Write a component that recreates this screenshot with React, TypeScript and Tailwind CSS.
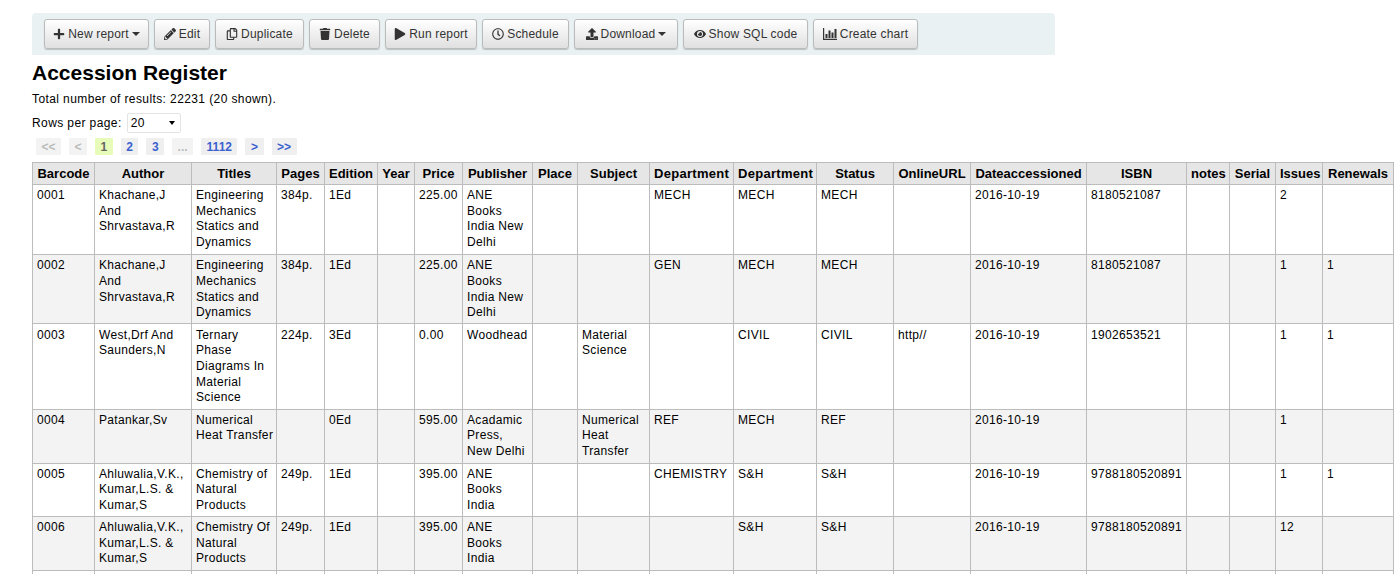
import { FaPlus, FaPencilAlt, FaRegCopy, FaTrash, FaPlay, FaRegClock, FaUpload, FaEye } from 'react-icons/fa';
import type { ReactNode } from 'react';

const columns: { label: string; width: number }[] = [
  { label: 'Barcode', width: 62 },
  { label: 'Author', width: 97 },
  { label: 'Titles', width: 85 },
  { label: 'Pages', width: 48 },
  { label: 'Edition', width: 53 },
  { label: 'Year', width: 37 },
  { label: 'Price', width: 48 },
  { label: 'Publisher', width: 70 },
  { label: 'Place', width: 45 },
  { label: 'Subject', width: 72 },
  { label: 'Department', width: 84 },
  { label: 'Department', width: 83 },
  { label: 'Status', width: 77 },
  { label: 'OnlineURL', width: 77 },
  { label: 'Dateaccessioned', width: 116 },
  { label: 'ISBN', width: 100 },
  { label: 'notes', width: 43 },
  { label: 'Serial', width: 46 },
  { label: 'Issues', width: 47 },
  { label: 'Renewals', width: 71 },
];

const rows: string[][] = [
  ['0001', 'Khachane,J And Shrvastava,R', 'Engineering Mechanics Statics and Dynamics', '384p.', '1Ed', '', '225.00', 'ANE Books India New Delhi', '', '', 'MECH', 'MECH', 'MECH', '', '2016-10-19', '8180521087', '', '', '2', ''],
  ['0002', 'Khachane,J And Shrvastava,R', 'Engineering Mechanics Statics and Dynamics', '384p.', '1Ed', '', '225.00', 'ANE Books India New Delhi', '', '', 'GEN', 'MECH', 'MECH', '', '2016-10-19', '8180521087', '', '', '1', '1'],
  ['0003', 'West,Drf And Saunders,N', 'Ternary Phase Diagrams In Material Science', '224p.', '3Ed', '', '0.00', 'Woodhead', '', 'Material Science', '', 'CIVIL', 'CIVIL', 'http//', '2016-10-19', '1902653521', '', '', '1', '1'],
  ['0004', 'Patankar,Sv', 'Numerical Heat\u00a0Transfer', '', '0Ed', '', '595.00', 'Acadamic Press, New Delhi', '', 'Numerical Heat Transfer', 'REF', 'MECH', 'REF', '', '2016-10-19', '', '', '', '1', ''],
  ['0005', 'Ahluwalia,V.K., Kumar,L.S. & Kumar,S', 'Chemistry of Natural Products', '249p.', '1Ed', '', '395.00', 'ANE Books India', '', '', 'CHEMISTRY', 'S&H', 'S&H', '', '2016-10-19', '9788180520891', '', '', '1', '1'],
  ['0006', 'Ahluwalia,V.K., Kumar,L.S. & Kumar,S', 'Chemistry Of Natural Products', '249p.', '1Ed', '', '395.00', 'ANE Books India', '', '', '', 'S&H', 'S&H', '', '2016-10-19', '9788180520891', '', '', '12', ''],
];

// row heights in the picture don't round evenly, so the first rows get their own padding
const rowPadding = ['pt-[3px] pb-[4px]', 'pt-[3px] pb-[2px]', 'pt-[4px] pb-[3px]', 'py-[3px]', 'py-[3px]', 'py-[3px]'];

// font-awesome 4 bar-chart, the package only has the newer one
function BarChartIcon() {
  return (
    <svg viewBox="0 0 14 12" className="h-[12px] w-[14px]" fill="currentColor">
      <path d="M0 0h1.2v10.8H14V12H0z" />
      <path d="M2.5 6h2v4h-2zM5.5 2.5h2V10h-2zM8.5 4.5h2V10h-2zM11.5 1h2v9h-2z" />
    </svg>
  );
}

function Caret() {
  return <span className="inline-block h-0 w-0 border-x-4 border-t-4 border-x-transparent border-t-[#333]" />;
}

function ToolButton({ icon, label, caret, width }: { icon: ReactNode; label: string; caret?: boolean; width: string }) {
  return (
    <button className={`flex h-[30px] items-center justify-center gap-[3px] rounded-[3px] border border-[#bbb] bg-gradient-to-b from-white to-[#e0e0e0] text-[12px] tracking-[0.2px] text-[#333] shadow-[0_1px_1px_rgba(0,0,0,0.2)] ${width}`}>
      <span className="text-[12px]">{icon}</span>
      {label}
      {caret && <Caret />}
    </button>
  );
}

function PageLink({ children, tone = 'link' }: { children: ReactNode; tone?: 'link' | 'off' | 'current' }) {
  const toneClass =
    tone === 'off' ? 'bg-[#f3f3f3] text-[#bbb]' : tone === 'current' ? 'bg-[#e6fcb8] text-[#666]' : 'bg-[#efefef] text-[#3a62d0]';
  return <span className={`flex h-[17px] items-center rounded-[1px] px-[5.5px] text-[12px] font-bold tracking-normal ${toneClass}`}>{children}</span>;
}

export default function App() {
  return (
    <div className="h-screen overflow-hidden bg-white pl-[32px] pt-[13px] font-['Liberation_Sans',Arial,sans-serif] text-[12px] tracking-[0.4px] text-black">
      <div className="flex h-[42px] w-[1023px] items-center gap-[5px] rounded-t-[4px] bg-[#e9f1f3] pb-[1px] pl-[12px]">
        <ToolButton icon={<FaPlus />} label="New report" caret width="w-[105px]" />
        <ToolButton icon={<FaPencilAlt />} label="Edit" width="w-[56px]" />
        <ToolButton icon={<FaRegCopy />} label="Duplicate" width="w-[89px]" />
        <ToolButton icon={<FaTrash />} label="Delete" width="w-[71px]" />
        <ToolButton icon={<FaPlay />} label="Run report" width="w-[92px]" />
        <ToolButton icon={<FaRegClock />} label="Schedule" width="w-[87px]" />
        <ToolButton icon={<FaUpload />} label="Download" caret width="w-[104px]" />
        <ToolButton icon={<FaEye />} label="Show SQL code" width="w-[125px]" />
        <ToolButton icon={<BarChartIcon />} label="Create chart" width="w-[105px]" />
      </div>

      <h1 className="mt-[6px] text-[21px] leading-[24px] font-bold tracking-normal">Accession Register</h1>
      <p className="mt-[6px] leading-[16px]">Total number of results: 22231 (20 shown).</p>

      <div className="mt-[6px] flex items-center gap-[5px] leading-[16px]">
        <span>Rows per page:</span>
        <div className="flex h-[20px] w-[54px] items-center justify-between rounded-[2px] border border-[#e4e4e4] pl-[3px] pr-[5px]">
          <span>20</span>
          <span className="h-0 w-0 border-x-[3.5px] border-t-[4px] border-x-transparent border-t-black" />
        </div>
      </div>

      <div className="mt-[5px] flex gap-[8px] pl-[4px]">
        <PageLink tone="off">&lt;&lt;</PageLink>
        <PageLink tone="off">&lt;</PageLink>
        <PageLink tone="current">1</PageLink>
        <PageLink>2</PageLink>
        <PageLink>3</PageLink>
        <PageLink tone="off">...</PageLink>
        <PageLink>1112</PageLink>
        <PageLink>&gt;</PageLink>
        <PageLink>&gt;&gt;</PageLink>
      </div>

      <table className="mt-[7px] w-[1362px] table-fixed border-collapse leading-[15.6px]">
        <colgroup>
          {columns.map((col, i) => (
            <col key={i} style={{ width: col.width }} />
          ))}
        </colgroup>
        <thead>
          <tr>
            {columns.map((col, i) => (
              <th
                key={i}
                className={`h-[22px] whitespace-nowrap border border-[#bcbcbc] bg-[#e6e6e6] px-[4px] text-center text-[13px] font-bold ${col.label === 'Department' ? 'tracking-[0.3px]' : 'tracking-normal'}`}
              >
                {col.label}
              </th>
            ))}
          </tr>
        </thead>
        <tbody>
          {rows.map((row, r) => (
            <tr key={r} className={r % 2 === 1 ? 'bg-[#f3f3f3]' : 'bg-white'}>
              {row.map((cell, c) => (
                <td key={c} className={`border border-[#bcbcbc] px-[4px] align-top tracking-[0.33px] ${rowPadding[r]}`}>
                  {cell}
                </td>
              ))}
            </tr>
          ))}
          {/* next row is below the fold, only its borders show */}
          <tr className="h-[40px] bg-white">
            {columns.map((_, c) => (
              <td key={c} className="border border-[#bcbcbc]" />
            ))}
          </tr>
        </tbody>
      </table>
    </div>
  );
}
